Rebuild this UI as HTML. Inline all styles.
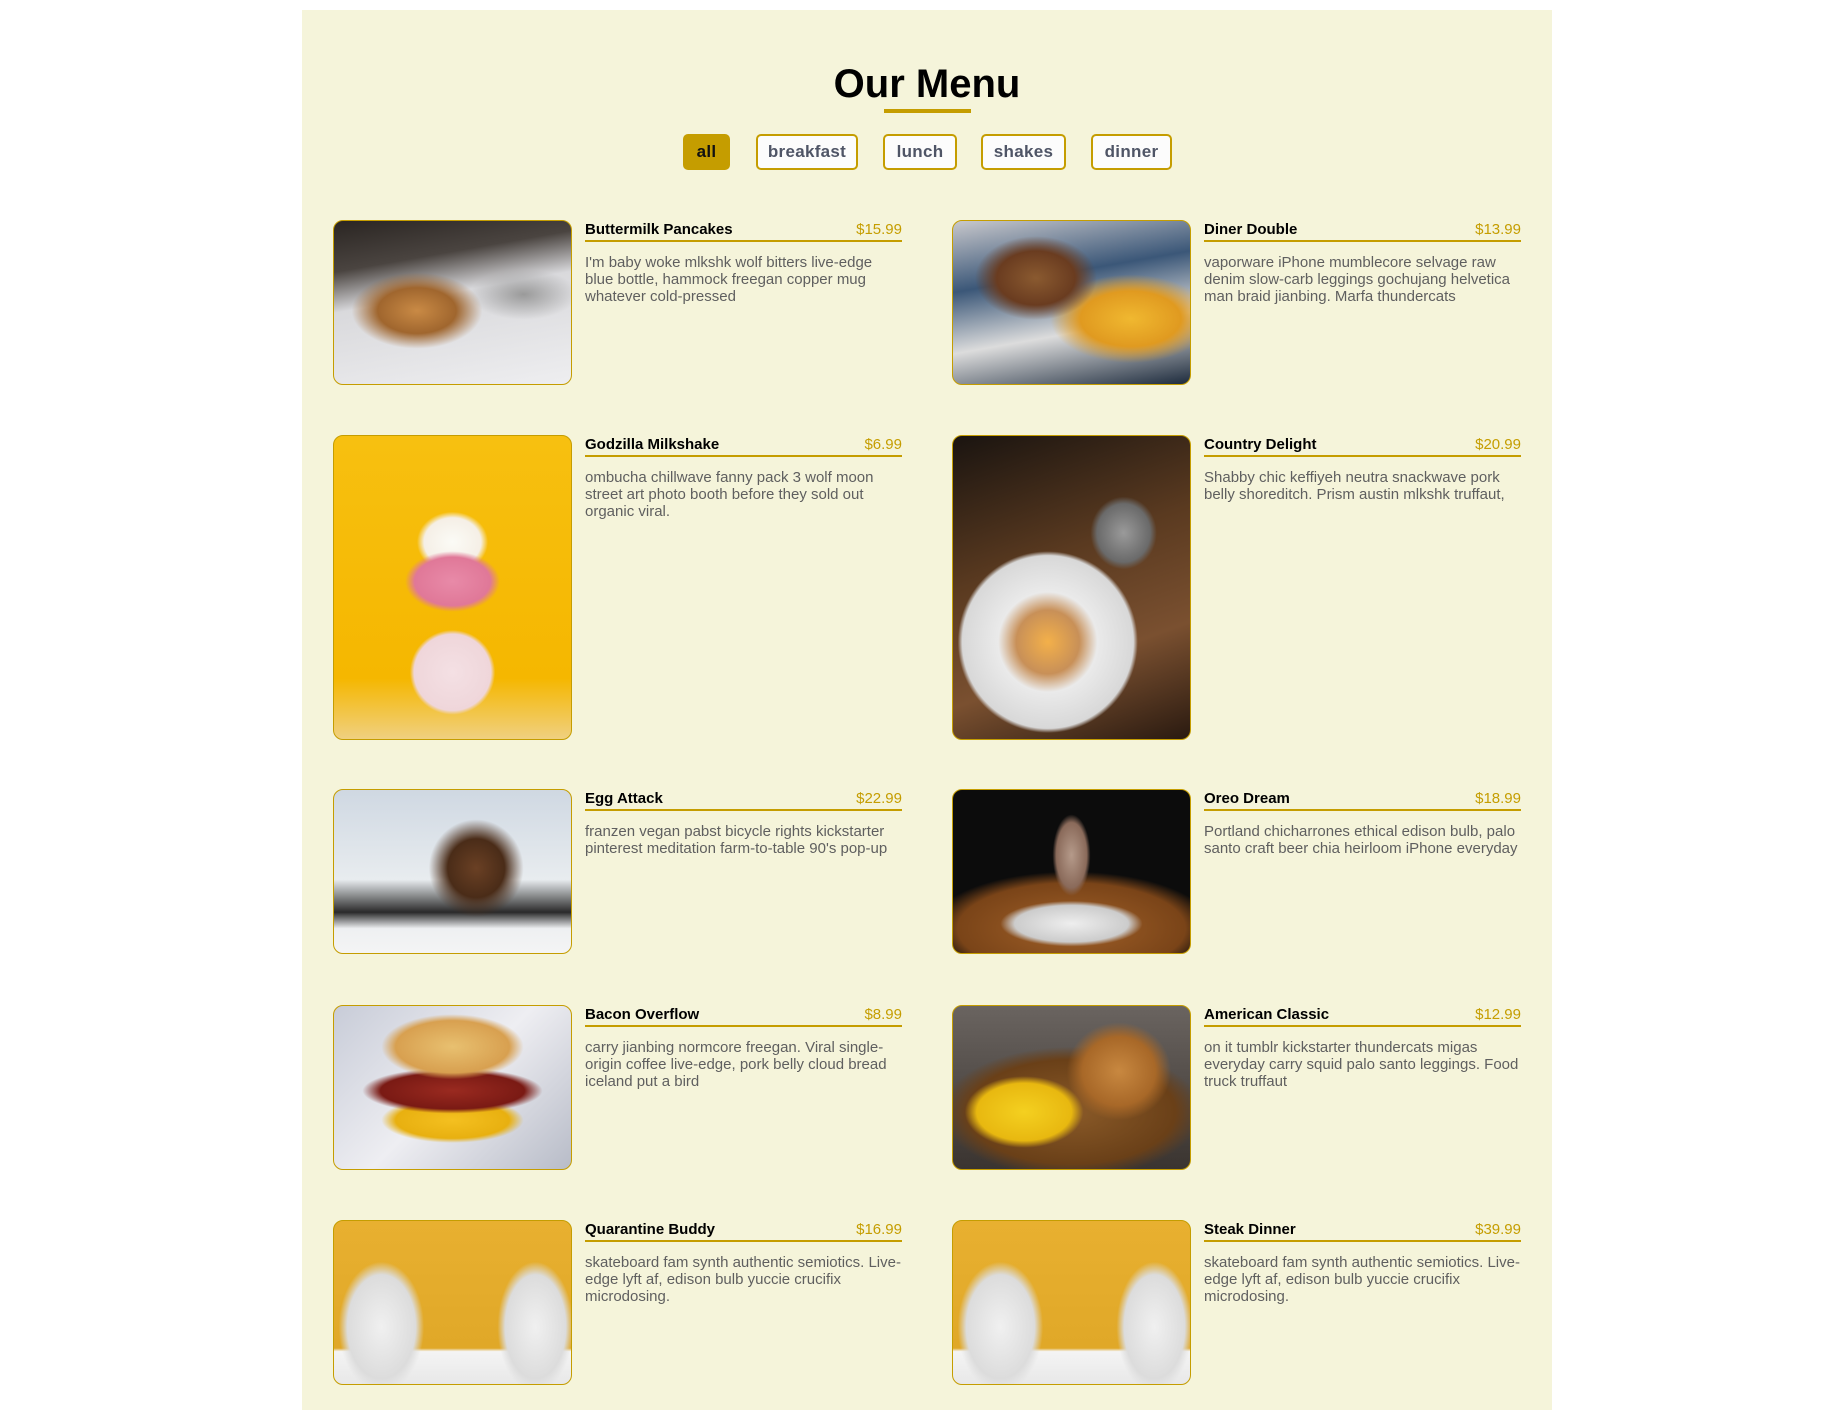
<!DOCTYPE html>
<html><head><meta charset="utf-8"><style>
*{margin:0;padding:0;box-sizing:border-box}
body{width:1835px;height:1420px;background:#fff;font-family:"Liberation Sans",Arial,sans-serif;position:relative;overflow:hidden}
.sec{position:absolute;left:302px;top:10px;width:1250px;height:1400px;background:#f5f4da}
h1{position:absolute;left:302px;width:1250px;top:62px;text-align:center;font-size:40px;font-weight:bold;color:#000}
.ul{position:absolute;left:884px;top:109px;width:87px;height:4px;background:#c59d00}
.btn{position:absolute;top:134px;height:36px;border:2px solid #c59d00;border-radius:5px;background:#fcfcfc;color:#4f5566;font-weight:bold;font-size:17px;line-height:32px;text-align:center;letter-spacing:.3px}
.btn.a{background:#c59d00;color:#111}
.img{position:absolute;width:239px;border:1px solid #c59d00;border-radius:10px;overflow:hidden}
.t{position:absolute;width:317px}
.hd{display:flex;justify-content:space-between;font-size:15px;height:21px;border-bottom:2px solid #c59d00;line-height:17px}
.hd b{color:#000}
.hd span{color:#c59d00}
.t p{margin-top:12px;font-size:15px;line-height:17px;color:#5f5f5f;width:318px}
</style></head><body>
<div class="sec"></div>
<h1>Our Menu</h1>
<div class="ul"></div>
<div class="btn a" style="left:683px;width:47px">all</div>
<div class="btn" style="left:756px;width:102px">breakfast</div>
<div class="btn" style="left:883px;width:74px">lunch</div>
<div class="btn" style="left:981px;width:85px">shakes</div>
<div class="btn" style="left:1091px;width:81px">dinner</div>

<div class="img" style="left:333px;top:220px;height:165px;background:radial-gradient(ellipse at 35% 55%,#c98a45 0,#a0662e 18%,transparent 30%),radial-gradient(ellipse at 80% 45%,#9a9a9a 0,transparent 20%),linear-gradient(170deg,#2a2522 0,#4a4440 25%,#d9d9dc 45%,#eeeef0 100%)"></div>
<div class="t" style="left:585px;top:221px"><div class="hd"><b>Buttermilk Pancakes</b><span>$15.99</span></div><p>I'm baby woke mlkshk wolf bitters live-edge blue bottle, hammock freegan copper mug whatever cold-pressed</p></div>

<div class="img" style="left:952px;top:220px;height:165px;background:radial-gradient(ellipse at 35% 35%,#8a5a30 0,#6a3c20 18%,transparent 28%),radial-gradient(ellipse at 75% 60%,#f0b830 0,#e09a20 20%,transparent 32%),linear-gradient(170deg,#c8c8cc 0,#3b5778 35%,#dcdcdc 65%,#1d2b3d 100%)"></div>
<div class="t" style="left:1204px;top:221px"><div class="hd"><b>Diner Double</b><span>$13.99</span></div><p>vaporware iPhone mumblecore selvage raw denim slow-carb leggings gochujang helvetica man braid jianbing. Marfa thundercats</p></div>

<div class="img" style="left:333px;top:435px;height:305px;background:radial-gradient(ellipse 18% 14% at 50% 78%,#f4e0e4 0,#efd6da 90%,transparent 100%),radial-gradient(ellipse 20% 10% at 50% 48%,#e88aa8 0,#e07898 80%,transparent 100%),radial-gradient(ellipse 15% 10% at 50% 35%,#fbfbf6 0,#f5efe6 80%,transparent 100%),linear-gradient(180deg,#f7c010 0,#f5b700 80%,#f0d080 100%)"></div>
<div class="t" style="left:585px;top:436px"><div class="hd"><b>Godzilla Milkshake</b><span>$6.99</span></div><p>ombucha chillwave fanny pack 3 wolf moon street art photo booth before they sold out organic viral.</p></div>

<div class="img" style="left:952px;top:435px;height:305px;background:radial-gradient(ellipse 38% 30% at 40% 68%,#f3b04a 0,#c89058 35%,#eaeaea 55%,#d8d8d8 95%,transparent 100%),radial-gradient(ellipse 14% 12% at 72% 32%,#9a9a9a 0,#6a6a6a 80%,transparent 100%),linear-gradient(160deg,#1a1410 0,#5a3a20 40%,#7a5030 70%,#2a1a10 100%)"></div>
<div class="t" style="left:1204px;top:436px"><div class="hd"><b>Country Delight</b><span>$20.99</span></div><p>Shabby chic keffiyeh neutra snackwave pork belly shoreditch. Prism austin mlkshk truffaut,</p></div>

<div class="img" style="left:333px;top:789px;height:165px;background:radial-gradient(ellipse 20% 30% at 60% 48%,#6a4024 0,#4a2c18 60%,transparent 100%),linear-gradient(180deg,#cfd8e2 0,#e8ecef 55%,#2a2a2a 75%,#eef0f2 85%,#f4f4f4 100%)"></div>
<div class="t" style="left:585px;top:790px"><div class="hd"><b>Egg Attack</b><span>$22.99</span></div><p>franzen vegan pabst bicycle rights kickstarter pinterest meditation farm-to-table 90's pop-up</p></div>

<div class="img" style="left:952px;top:789px;height:165px;background:radial-gradient(ellipse 8% 25% at 50% 40%,#b59a8a 0,#8a6a5a 80%,transparent 100%),radial-gradient(ellipse 30% 14% at 50% 82%,#eeeeee 0,#cccccc 80%,transparent 100%),radial-gradient(ellipse 60% 35% at 50% 85%,#a06028 0,#7a4418 80%,transparent 100%),#0c0c0c"></div>
<div class="t" style="left:1204px;top:790px"><div class="hd"><b>Oreo Dream</b><span>$18.99</span></div><p>Portland chicharrones ethical edison bulb, palo santo craft beer chia heirloom iPhone everyday</p></div>

<div class="img" style="left:333px;top:1005px;height:165px;background:radial-gradient(ellipse 30% 20% at 50% 25%,#e8c070 0,#d8a050 80%,transparent 100%),radial-gradient(ellipse 38% 14% at 50% 52%,#9a2a20 0,#7a1a14 80%,transparent 100%),radial-gradient(ellipse 30% 14% at 50% 70%,#f4c020 0,#e8b010 80%,transparent 100%),linear-gradient(135deg,#c8ccd8 0,#eeeef2 50%,#b8bcc8 100%)"></div>
<div class="t" style="left:585px;top:1006px"><div class="hd"><b>Bacon Overflow</b><span>$8.99</span></div><p>carry jianbing normcore freegan. Viral single-origin coffee live-edge, pork belly cloud bread iceland put a bird</p></div>

<div class="img" style="left:952px;top:1005px;height:165px;background:radial-gradient(ellipse 22% 30% at 70% 40%,#c88840 0,#a86828 70%,transparent 100%),radial-gradient(ellipse 25% 22% at 30% 65%,#f4d020 0,#e8b810 80%,transparent 100%),radial-gradient(ellipse 55% 40% at 50% 65%,#8a5a28 0,#6a4018 80%,transparent 100%),linear-gradient(180deg,#6a6460 0,#3a3430 100%)"></div>
<div class="t" style="left:1204px;top:1006px"><div class="hd"><b>American Classic</b><span>$12.99</span></div><p>on it tumblr kickstarter thundercats migas everyday carry squid palo santo leggings. Food truck truffaut</p></div>

<div class="img" style="left:333px;top:1220px;height:165px;background:radial-gradient(ellipse 18% 40% at 20% 65%,#f0f0f0 0,#dcdcdc 80%,transparent 100%),radial-gradient(ellipse 16% 40% at 85% 65%,#f0f0f0 0,#dcdcdc 80%,transparent 100%),linear-gradient(180deg,#e8b030 0,#e0a828 78%,#f4f4f4 80%,#e8e8e8 100%)"></div>
<div class="t" style="left:585px;top:1221px"><div class="hd"><b>Quarantine Buddy</b><span>$16.99</span></div><p>skateboard fam synth authentic semiotics. Live-edge lyft af, edison bulb yuccie crucifix microdosing.</p></div>

<div class="img" style="left:952px;top:1220px;height:165px;background:radial-gradient(ellipse 18% 40% at 20% 65%,#f0f0f0 0,#dcdcdc 80%,transparent 100%),radial-gradient(ellipse 16% 40% at 85% 65%,#f0f0f0 0,#dcdcdc 80%,transparent 100%),linear-gradient(180deg,#e8b030 0,#e0a828 78%,#f4f4f4 80%,#e8e8e8 100%)"></div>
<div class="t" style="left:1204px;top:1221px"><div class="hd"><b>Steak Dinner</b><span>$39.99</span></div><p>skateboard fam synth authentic semiotics. Live-edge lyft af, edison bulb yuccie crucifix microdosing.</p></div>
</body></html>
